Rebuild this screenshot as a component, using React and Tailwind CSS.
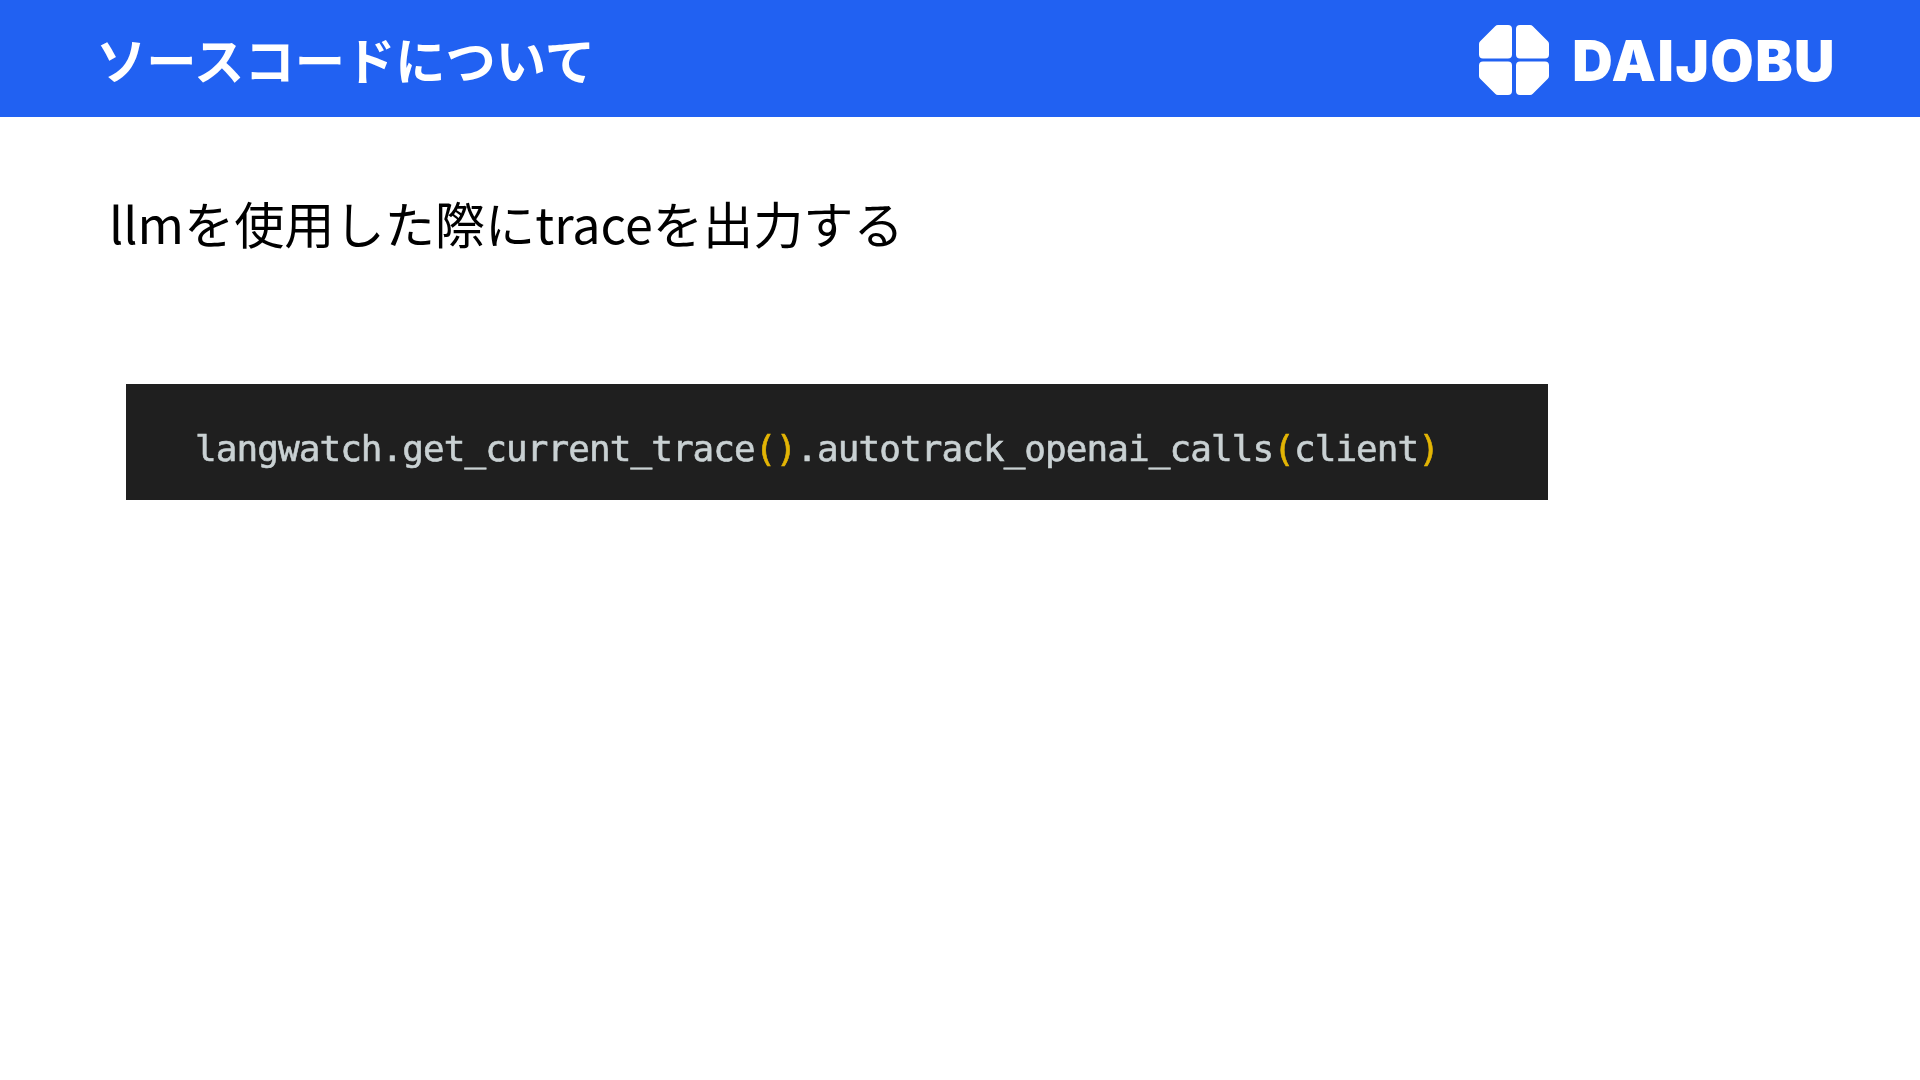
import React from "react";

const CJK = "font-['Noto_Sans_CJK_JP','Noto_Sans',sans-serif]";

function LogoMark() {
  return (
    <svg width="70" height="70" viewBox="0 0 70 70" className="mt-[3px] shrink-0">
      <g fill="#ffffff" stroke="#ffffff" strokeWidth="8" strokeLinejoin="round">
        <path d="M4 19 L19 4 L29 4 L29 29.5 L4 29.5 Z" />
        <path d="M41 4 L51 4 L66 19 L66 29.5 L41 29.5 Z" />
        <path d="M4 40.5 L29 40.5 L29 66 L19 66 L4 51 Z" />
        <path d="M41 40.5 L66 40.5 L66 51 L51 66 L41 66 Z" />
      </g>
    </svg>
  );
}

export default function App() {
  return (
    <div className={`min-h-[1080px] w-full bg-white ${CJK}`}>
      {/* Header */}
      <header className="flex h-[117px] items-center justify-between bg-[#2161f2] pl-[96px] pr-[84px]">
        <h1 className="text-[50.3px] leading-none font-bold text-white">ソースコードについて</h1>
        <div className="flex items-center gap-[23px]">
          <LogoMark />
          <span className="pt-[4px] font-['Inter',sans-serif] text-[56px] leading-none font-black tracking-[1.5px] text-white">
            DAIJOBU
          </span>
        </div>
      </header>

      <main className="pl-[109px] pt-[69px]">
        <p className="text-[50.2px] leading-[72px] text-black">llmを使用した際にtraceを出力する</p>

        {/* Code block */}
        <div className="ml-[17px] mt-[126px] flex h-[116px] w-[1422px] items-center bg-[#1f1f1f] pl-[69px] pt-[14px]">
          <code className="whitespace-pre font-['DejaVu_Sans_Mono',monospace] text-[36px] leading-none tracking-[-0.94px] text-[#c9d1d3] blur-[0.5px] [-webkit-text-stroke:0.6px_#c9d1d3]">
            langwatch.get_current_trace<span className="text-[#e3b505] [-webkit-text-stroke:0.6px_#e3b505]">()</span>.autotrack_openai_calls
            <span className="text-[#e3b505] [-webkit-text-stroke:0.6px_#e3b505]">(</span>client<span className="text-[#e3b505] [-webkit-text-stroke:0.6px_#e3b505]">)</span>
          </code>
        </div>
      </main>
    </div>
  );
}
